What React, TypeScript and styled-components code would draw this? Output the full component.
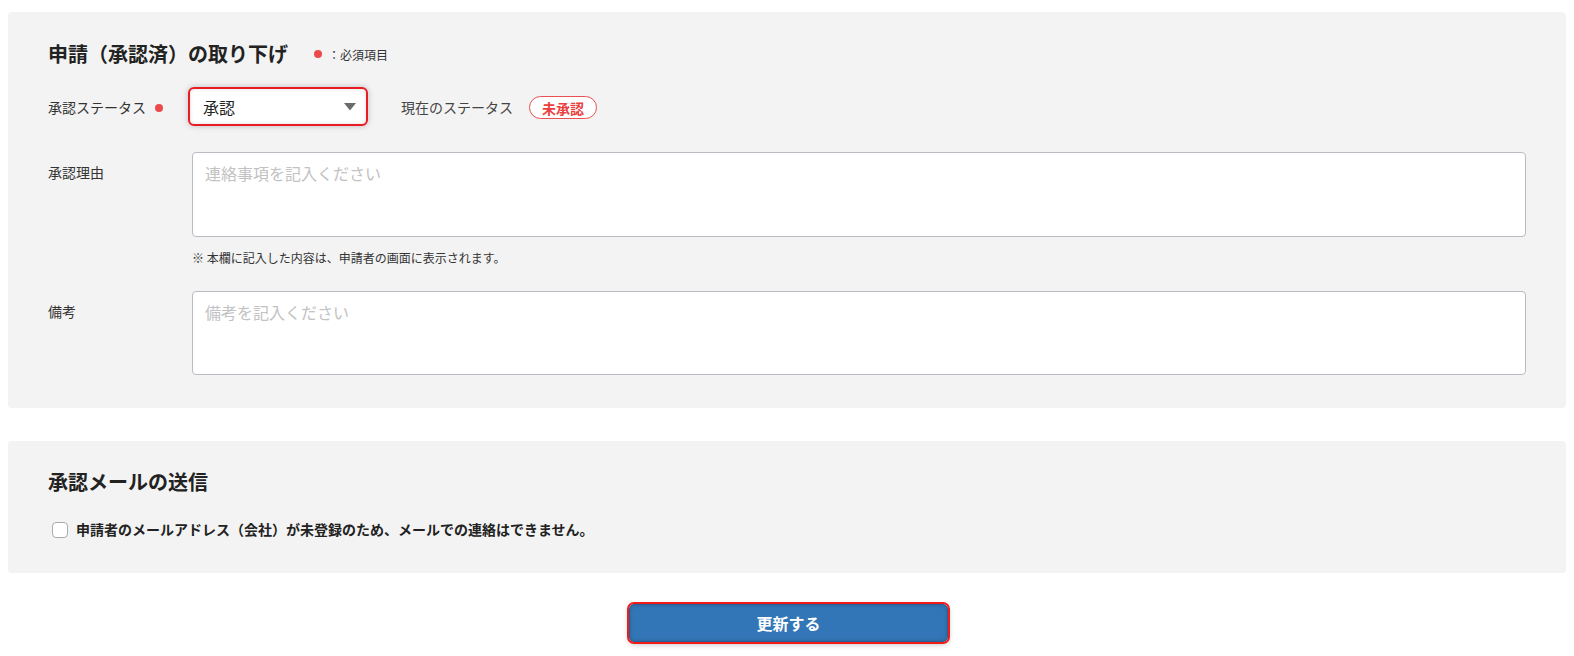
import React from "react";
import styled, { createGlobalStyle } from "styled-components";

const GlobalStyle = createGlobalStyle`
  html, body {
    margin: 0;
    padding: 0;
    background: #ffffff;
  }
  body {
    font-family: "Noto Sans CJK JP", "Noto Sans", sans-serif;
    color: #333333;
  }
  * { box-sizing: border-box; }
`;

const Page = styled.div`
  padding: 12px 8px 13px;
  display: flex;
  flex-direction: column;
`;

const Panel = styled.section<{ $pad: string; $mt?: number }>`
  background: #f3f3f3;
  border-radius: 4px;
  padding: ${(p) => p.$pad};
  margin-top: ${(p) => p.$mt ?? 0}px;
`;

const TitleRow = styled.div`
  display: flex;
  align-items: center;
  height: 30px;
`;

const SectionTitle = styled.h2`
  margin: 0;
  font-size: 20px;
  line-height: 30px;
  font-weight: 700;
  color: #222222;
`;

const RequiredNote = styled.span`
  display: flex;
  align-items: center;
  margin-left: 26px;
  font-size: 12px;
  color: #333333;
  gap: 6px;
`;

const RedDot = styled.span<{ $ml?: number }>`
  display: inline-block;
  width: 8px;
  height: 8px;
  border-radius: 50%;
  background: #ec4a4a;
  margin-left: ${(p) => p.$ml ?? 0}px;
  flex: none;
`;

const StatusRow = styled.div`
  display: flex;
  align-items: center;
  margin-top: 18px;
  height: 39px;
`;

const StatusLabel = styled.div`
  width: 140px;
  display: flex;
  align-items: center;
  font-size: 14px;
  line-height: 21px;
  color: #333333;
  margin-top: 2px;
`;

const SelectBox = styled.div`
  width: 180px;
  height: 39px;
  border: 2px solid #ea1b22;
  border-radius: 6px;
  background: #ffffff;
  box-shadow: 0 0 6px rgba(0, 0, 0, 0.22), inset 0 0 4px rgba(0, 0, 0, 0.12);
  display: flex;
  align-items: center;
  justify-content: space-between;
  padding: 0 10px 0 13px;
  font-size: 16px;
  color: #222222;
`;

const CurrentLabel = styled.span`
  margin-left: 33px;
  font-size: 14px;
  line-height: 21px;
  color: #444444;
  margin-top: 2px;
`;

const Badge = styled.span`
  margin-left: 16px;
  margin-top: 2px;
  height: 23px;
  width: 68px;
  border: 1px solid #ea5050;
  border-radius: 12px;
  background: #ffffff;
  color: #ea4040;
  font-size: 14px;
  font-weight: 700;
  display: flex;
  align-items: center;
  justify-content: center;
`;

const FieldRow = styled.div<{ $mt: number }>`
  display: grid;
  grid-template-columns: 144px 1fr;
  margin-top: ${(p) => p.$mt}px;
`;

const FieldLabel = styled.div`
  font-size: 14px;
  line-height: 21px;
  padding-top: 10px;
  color: #333333;
`;

const FieldBody = styled.div`
  display: flex;
  flex-direction: column;
`;

const TextArea = styled.textarea<{ $h: number }>`
  width: 100%;
  height: ${(p) => p.$h}px;
  border: 1px solid #b9bcc2;
  border-radius: 4px;
  background: #ffffff;
  padding: 8px 12px;
  font-family: "Noto Sans CJK JP", "Noto Sans", sans-serif;
  font-size: 16px;
  line-height: 24px;
  color: #333333;
  resize: none;
  display: block;
  outline: none;
  &::placeholder {
    color: #c2c2c2;
  }
`;

const Note = styled.p`
  margin: 12px 0 0;
  font-size: 12px;
  line-height: 18px;
  color: #333333;
`;

const CheckRow = styled.label`
  display: flex;
  align-items: center;
  margin-top: 21px;
  height: 21px;
  padding-left: 4px;
  font-size: 14px;
  font-weight: 700;
  color: #222222;
`;

const CheckBox = styled.span`
  width: 16px;
  height: 16px;
  border: 1px solid #a9abb0;
  border-radius: 4px;
  background: #ffffff;
  margin-right: 8px;
  margin-top: 2px;
  flex: none;
`;

const ButtonWrap = styled.div`
  display: flex;
  justify-content: center;
  margin-top: 31px;
`;

const SubmitButton = styled.button`
  width: 319px;
  height: 38px;
  margin-left: 3px;
  border: 1px solid #2a5f93;
  border-radius: 5px;
  outline: 2px solid #f01c1c;
  outline-offset: 0;
  background: #3276b7;
  box-shadow: 0 2px 6px rgba(0, 0, 0, 0.28), inset 0 0 4px rgba(0, 0, 0, 0.18);
  color: #ffffff;
  font-family: "Noto Sans CJK JP", "Noto Sans", sans-serif;
  font-size: 16px;
  font-weight: 700;
  cursor: pointer;
`;

export default function App() {
  return (
    <>
      <GlobalStyle />
      <Page>
        <Panel $pad="27px 40px 33px">
          <TitleRow>
            <SectionTitle>申請（承認済）の取り下げ</SectionTitle>
            <RequiredNote>
              <RedDot />
              <span>：必須項目</span>
            </RequiredNote>
          </TitleRow>

          <StatusRow>
            <StatusLabel>
              承認ステータス
              <RedDot $ml={9} />
            </StatusLabel>
            <SelectBox>
              <span>承認</span>
              <svg width="12" height="8" viewBox="0 0 12 8">
                <path d="M0 0 H12 L6 7.5 Z" fill="#6b6b6b" />
              </svg>
            </SelectBox>
            <CurrentLabel>現在のステータス</CurrentLabel>
            <Badge>未承認</Badge>
          </StatusRow>

          <FieldRow $mt={26}>
            <FieldLabel>承認理由</FieldLabel>
            <FieldBody>
              <TextArea $h={85} placeholder="連絡事項を記入ください" />
              <Note>※ 本欄に記入した内容は、申請者の画面に表示されます。</Note>
            </FieldBody>
          </FieldRow>

          <FieldRow $mt={24}>
            <FieldLabel>備考</FieldLabel>
            <FieldBody>
              <TextArea $h={84} placeholder="備考を記入ください" />
            </FieldBody>
          </FieldRow>
        </Panel>

        <Panel $pad="26px 40px 34px" $mt={33}>
          <TitleRow>
            <SectionTitle>承認メールの送信</SectionTitle>
          </TitleRow>
          <CheckRow>
            <CheckBox />
            申請者のメールアドレス（会社）が未登録のため、メールでの連絡はできません。
          </CheckRow>
        </Panel>

        <ButtonWrap>
          <SubmitButton>更新する</SubmitButton>
        </ButtonWrap>
      </Page>
    </>
  );
}
